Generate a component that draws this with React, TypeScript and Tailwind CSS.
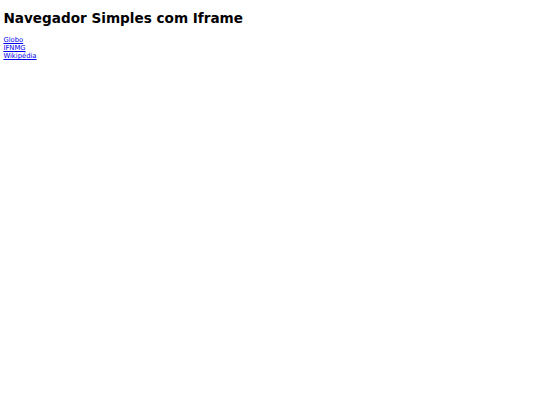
export default function App() {
  return (
    <div className="min-h-[405px] bg-white px-[3.4px] pt-[10px] font-['DejaVu_Sans',sans-serif] text-black">
      <h1 className="mb-[10px] text-[13.6px] font-bold leading-[16px]">
        Navegador Simples com Iframe
      </h1>
      <nav className="flex flex-col items-start text-[6.8px] leading-[8px]">
        <a href="#" className="text-[#0000ee] underline">
          Globo
        </a>
        <a href="#" className="text-[#0000ee] underline">
          IFNMG
        </a>
        <a href="#" className="text-[#0000ee] underline">
          Wikipédia
        </a>
      </nav>
    </div>
  );
}
